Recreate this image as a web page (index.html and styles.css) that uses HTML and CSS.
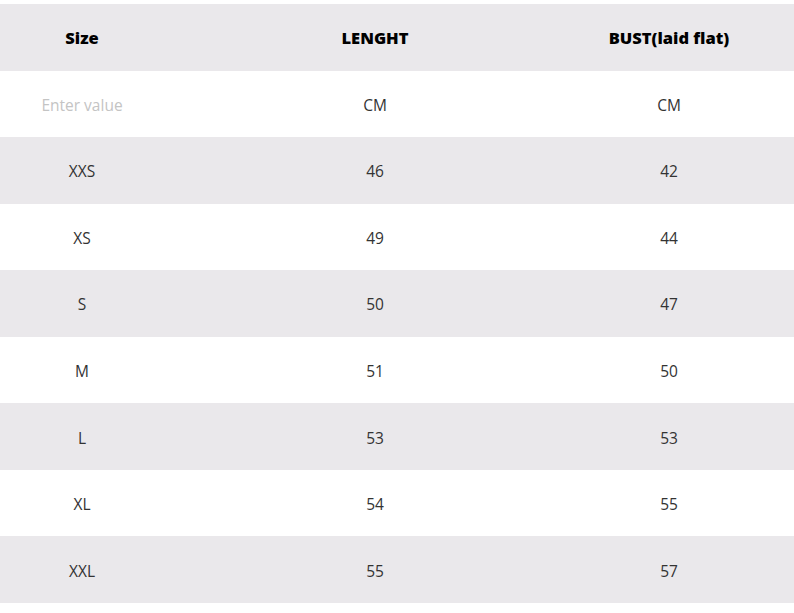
FILE: index.html
```html
<!DOCTYPE html>
<html>
<head>
<meta charset="utf-8">
<link rel="stylesheet" href="styles.css">
</head>
<body>
<div class="table">
  <div class="row head"><div class="cell">Size</div><div class="cell">LENGHT</div><div class="cell">BUST(laid flat)</div></div>
  <div class="row"><div class="cell placeholder">Enter value</div><div class="cell">CM</div><div class="cell">CM</div></div>
  <div class="row alt"><div class="cell">XXS</div><div class="cell">46</div><div class="cell">42</div></div>
  <div class="row"><div class="cell">XS</div><div class="cell">49</div><div class="cell">44</div></div>
  <div class="row alt"><div class="cell">S</div><div class="cell">50</div><div class="cell">47</div></div>
  <div class="row"><div class="cell">M</div><div class="cell">51</div><div class="cell">50</div></div>
  <div class="row alt"><div class="cell">L</div><div class="cell">53</div><div class="cell">53</div></div>
  <div class="row"><div class="cell">XL</div><div class="cell">54</div><div class="cell">55</div></div>
  <div class="row alt"><div class="cell">XXL</div><div class="cell">55</div><div class="cell">57</div></div>
</div>
</body>
</html>
```
FILE: styles.css
```css
html, body {
  margin: 0;
  padding: 0;
  background: #ffffff;
}
body {
  font-family: "Open Sans", "Noto Sans", sans-serif;
  font-size: 15.5px;
  color: #333333;
}
.table {
  margin-top: 4px;
  display: grid;
  grid-auto-rows: 66.56px;
}
.row {
  display: grid;
  grid-template-columns: 164px 422px 166px 1fr;
  align-items: center;
  background: #ffffff;
}
.row.head, .row.alt {
  background: #eae8eb;
}
.cell {
  text-align: center;
  white-space: nowrap;
  padding-top: 2px;
}
.head .cell {
  font-weight: 800;
  color: #000000;
  font-size: 16.5px;
  padding-top: 0;
}
.placeholder {
  color: #c4c4c4;
}
```
